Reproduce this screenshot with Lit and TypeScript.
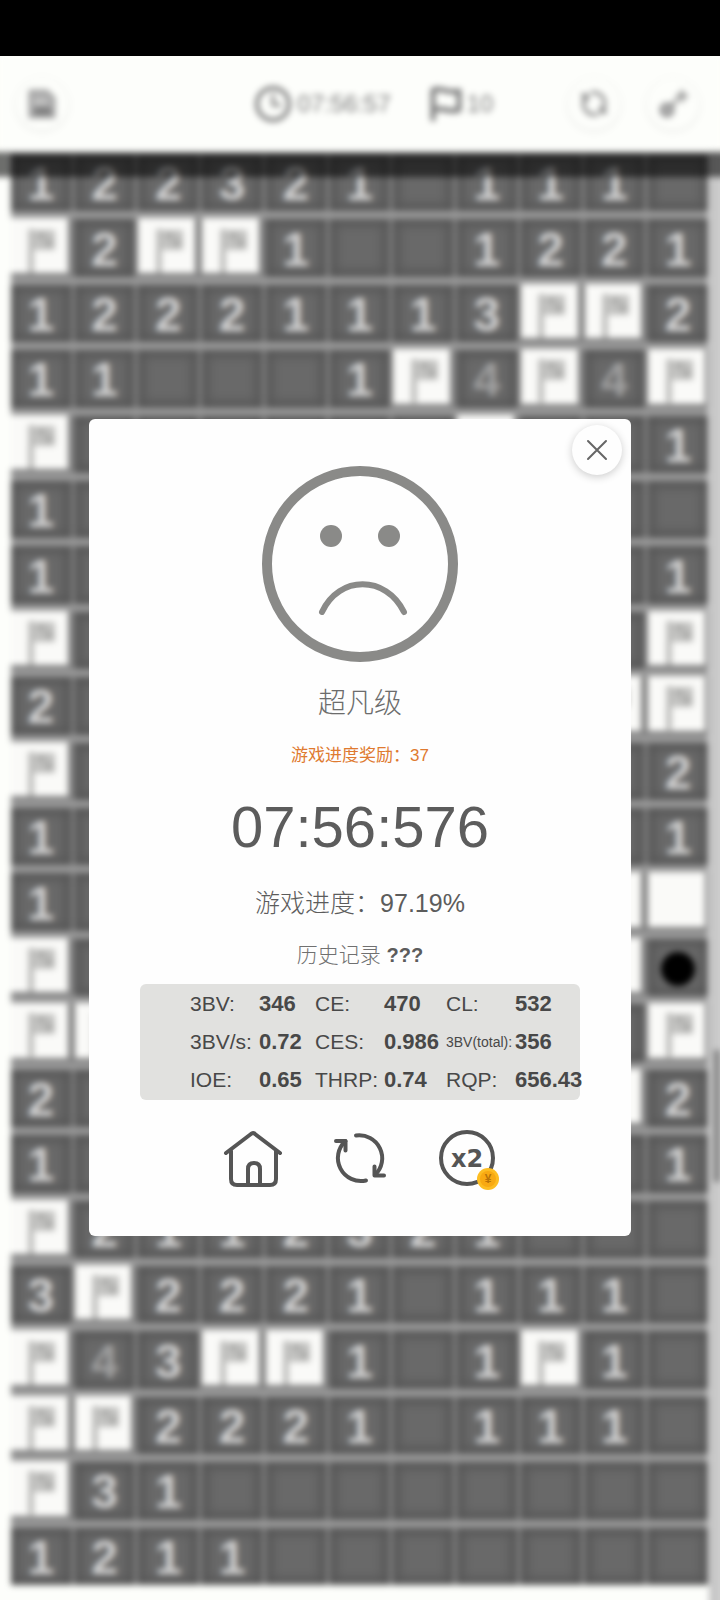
import { LitElement, html, css, svg, nothing } from "lit";
import { customElement, property } from "lit/decorators.js";
import { classMap } from "lit/directives/class-map.js";

// F flag, U covered, * mine, . cleared, digits are neighbour counts
const ROWS = [
  "122321.111.",
  "F2FF1..1221",
  "12221113FF2",
  "11...1F4F4F",
  "F......F..1",
  "1..........",
  "1.........1",
  "F.........F",
  "2........FF",
  "F.........2",
  "1.........1",
  "1........UU",
  "F........U*",
  "FF........F",
  "2........U2",
  "1.........1",
  "F2112321...",
  "3F2221.111.",
  "F43FF1.1F1.",
  "FF2221.111.",
  "F31........",
  "1211.......",
];

const STATS: Array<[string, string]> = [
  ["3BV:", "346"],
  ["CE:", "470"],
  ["CL:", "532"],
  ["3BV/s:", "0.72"],
  ["CES:", "0.986"],
  ["3BV(total):", "356"],
  ["IOE:", "0.65"],
  ["THRP:", "0.74"],
  ["RQP:", "656.43"],
];

const refreshPaths = svg`
  <path d="M25 5.5A23 23 0 0 1 44 45"/>
  <path d="M43.5 36.5V45.5H53"/>
  <path d="M35 50.5A23 23 0 0 1 14.5 11"/>
  <path d="M5 11H14.5V20.5"/>`;

@customElement("mine-header")
export class MineHeader extends LitElement {
  static styles = css`
    :host {
      display: flex;
      align-items: center;
      height: 96px;
      padding: 0 21px 0 16px;
      position: relative;
      z-index: 1;
      background: #fdfefb;
      box-sizing: border-box;
      color: #7c7c7c;
      font-size: 24px;
    }
    :host::after {
      content: "";
      position: absolute;
      left: -12px;
      right: -12px;
      top: 100%;
      height: 25px;
      background: rgba(0, 0, 0, 0.57);
    }
    .round {
      width: 52px;
      height: 52px;
      padding: 0;
      border: 0;
      border-radius: 50%;
      background: #fdfefb;
      box-shadow: 0 1px 4px rgba(0, 0, 0, 0.12);
      display: grid;
      place-items: center;
      color: #8c8c8c;
    }
    .wide { flex: 5; }
    .narrow { flex: 2; }
    .status {
      display: flex;
      align-items: center;
      gap: 38px;
    }
    .item {
      display: flex;
      align-items: center;
      gap: 5px;
    }
    .actions {
      display: flex;
      gap: 27px;
    }
    svg { display: block; fill: none; stroke: currentColor; stroke-linecap: round; stroke-linejoin: round; }
  `;
  render() {
    return html`
      <button class="round" aria-label="保存">
        <svg width="28" height="30" viewBox="0 0 28 30" stroke-width="3">
          <path d="M2 2H19L26 9V28H2Z" fill="#b0b0b0" stroke="#a0a0a0" />
          <path d="M7 13H17" stroke="#e4e4e2" stroke-width="2" />
          <path d="M8 24V20H21V24Z" stroke="#707070" stroke-width="3" />
        </svg>
      </button>
      <span class="wide"></span>
      <div class="status">
        <span class="item">
          <svg width="38" height="38" viewBox="0 0 38 38" stroke-width="4">
            <circle cx="19" cy="19" r="16" />
            <path d="M19 10V20H26" stroke-width="3" />
          </svg>
          <span>07:56:57</span>
        </span>
        <span class="item">
          <svg width="33" height="36" viewBox="0 0 33 36" stroke-width="5">
            <path d="M4 33V4C12 1 19 8 30 5V24C19 27 13 20 4 24" />
          </svg>
          <span>10</span>
        </span>
      </div>
      <span class="narrow"></span>
      <div class="actions">
        <button class="round" aria-label="重新开始">
          <svg width="28" height="28" viewBox="0 0 58 58" stroke-width="7">${refreshPaths}</svg>
        </button>
        <button class="round" aria-label="道具">
          <svg width="30" height="30" viewBox="0 0 30 30" stroke-width="3">
            <circle cx="9" cy="21" r="6" fill="#b0b0b0" />
            <path d="M14 16L19 11" />
            <path d="M24 2V12M19 7H29" />
          </svg>
        </button>
      </div>
    `;
  }
}

@customElement("mine-board")
export class MineBoard extends LitElement {
  @property({ attribute: false }) rows: string[] = [];

  static styles = css`
    :host {
      display: flex;
      flex-direction: column;
      gap: 8px;
      background: #989898;
    }
    .row {
      flex: 1 1 0;
      min-height: 0;
      display: grid;
      grid-template-columns: repeat(11, minmax(0, 1fr));
      grid-template-rows: minmax(0, 1fr);
      gap: 4px;
      background: #808080;
    }
    .cell {
      display: grid;
      place-items: center;
      box-sizing: border-box;
      overflow: hidden;
      padding-top: 3px;
      background: #696969;
      box-shadow: inset 0 0 8px 6px #565656;
      color: #d2d2d2;
      font-size: 48px;
      font-weight: 700;
      line-height: 54px;
    }
    .four { color: #a0a0a0; }
    .covered {
      margin: -1px 3px 4px 0;
      padding: 0;
      background: #fafaf8;
      box-shadow: none;
    }
    svg { display: block; }
  `;

  private cell(c: string) {
    const content =
      c === "F"
        ? html`<svg width="56" height="54" viewBox="0 0 56 54">
            <path d="M20 10V54" stroke="#b4b4b2" stroke-width="5" />
            <path d="M20 11H44V31H20Z" fill="#c2c2c0" />
            <path d="M27 13h7v7h-7zM34 20h8v8h-8z" fill="#adadab" />
          </svg>`
        : c === "*"
          ? html`<svg width="36" height="36" viewBox="0 0 36 36"><circle cx="18" cy="18" r="17" /></svg>`
          : c >= "1" && c <= "8"
            ? c
            : nothing;
    return html`<div class=${classMap({ cell: true, covered: c === "F" || c === "U", four: c === "4" })}>${content}</div>`;
  }

  render() {
    return this.rows.map((r) => html`<div class="row">${[...r].map((c) => this.cell(c))}</div>`);
  }
}

@customElement("result-dialog")
export class ResultDialog extends LitElement {
  static styles = css`
    :host {
      display: flex;
      flex-direction: column;
      align-items: center;
      position: relative;
      box-sizing: border-box;
      width: 100%;
      max-width: 542px;
      padding: 47px 0 48px;
      border-radius: 6px;
      background: #fefefe;
      color: #5c5c5c;
      white-space: nowrap;
    }
    .close {
      position: absolute;
      top: 6px;
      right: 9px;
      width: 50px;
      height: 50px;
      padding: 0;
      border: 0;
      border-radius: 50%;
      background: #fefefe;
      box-shadow: 0 2px 8px rgba(0, 0, 0, 0.2);
      display: grid;
      place-items: center;
    }
    svg { display: block; fill: none; stroke-linecap: round; stroke-linejoin: round; }
    h1, p, dl, dd { margin: 0; font-weight: 400; }
    h1 {
      margin-top: 22px;
      font-size: 28px;
      line-height: 40px;
      font-weight: 300;
      color: #6c6c6c;
    }
    .reward {
      margin-top: 20px;
      font-size: 17px;
      line-height: 24px;
      color: #df7a30;
    }
    .time {
      margin-top: 27px;
      font-size: 58px;
      line-height: 64px;
    }
    .progress {
      margin-top: 28px;
      font-size: 25px;
      line-height: 32px;
      font-weight: 300;
    }
    .history {
      margin-top: 22px;
      font-size: 21px;
      line-height: 28px;
      font-weight: 300;
      color: #707070;
    }
    .history b { font-weight: 700; font-size: 20px; color: #5c5c5c; }
    dl {
      display: grid;
      grid-template-columns: 69px 56px 69px 62px 69px 1fr;
      align-items: center;
      box-sizing: border-box;
      width: calc(100% - 102px);
      margin-top: 15px;
      padding: 1px 0 1px 50px;
      border-radius: 6px;
      background: #e1e1df;
      line-height: 38px;
      font-size: 22px;
      color: #484848;
    }
    dt { font-size: 21px; }
    .long { font-size: 14px; }
    dd { font-weight: 700; width: 0; }
    .actions {
      display: flex;
      gap: 49px;
      margin-top: 30px;
    }
    .actions button {
      width: 58px;
      height: 58px;
      padding: 0;
      border: 0;
      background: none;
    }
    .actions svg { stroke: #555; stroke-width: 4; overflow: visible; }
    .x2 { font: bold 24px "DejaVu Sans", sans-serif; fill: #555; stroke: none; }
    .yen { font: bold 12px "Liberation Sans", sans-serif; fill: #b97408; stroke: none; }
  `;
  render() {
    return html`
      <button class="close" aria-label="关闭">
        <svg width="22" height="22" viewBox="0 0 22 22" stroke="#666" stroke-width="2">
          <path d="M2 2L20 20M20 2L2 20" />
        </svg>
      </button>
      <svg width="196" height="196" viewBox="0 0 196 196" stroke="#8a8a88" aria-hidden="true">
        <circle cx="98" cy="98" r="93" stroke-width="10" />
        <circle cx="69" cy="70" r="11" fill="#8a8a88" stroke="none" />
        <circle cx="127" cy="70" r="11" fill="#8a8a88" stroke="none" />
        <path d="M60 146C77 109 124 109 142 146" stroke-width="6" />
      </svg>
      <h1>超凡级</h1>
      <p class="reward">游戏进度奖励：37</p>
      <p class="time">07:56:576</p>
      <p class="progress">游戏进度：97.19%</p>
      <p class="history">历史记录 <b>???</b></p>
      <dl>
        ${STATS.map(([k, v]) => html`<dt class=${classMap({ long: k.length > 8 })}>${k}</dt><dd>${v}</dd>`)}
      </dl>
      <div class="actions">
        <button aria-label="主页">
          <svg width="58" height="58" viewBox="0 0 58 58">
            <path d="M2 23L27 4Q29 2 31 4L56 23" />
            <path d="M7 21V49Q7 55 13 55H46Q52 55 52 49V21" />
            <path d="M24 54V39Q24 33 30 33Q36 33 36 39V54" />
          </svg>
        </button>
        <button aria-label="重新开始">
          <svg width="58" height="58" viewBox="0 0 58 58">${refreshPaths}</svg>
        </button>
        <button aria-label="双倍奖励">
          <svg width="58" height="58" viewBox="0 0 58 58">
            <circle cx="29" cy="28" r="26" />
            <text class="x2" x="29" y="37" text-anchor="middle">x2</text>
            <circle cx="50" cy="49" r="11" fill="#fdbd22" stroke="none" />
            <circle cx="50" cy="49" r="8" fill="#f8a912" stroke="none" />
            <text class="yen" x="50" y="53" text-anchor="middle">¥</text>
          </svg>
        </button>
      </div>
    `;
  }
}

@customElement("app-root")
export class AppRoot extends LitElement {
  static styles = css`
    :host {
      display: flex;
      flex-direction: column;
      position: relative;
      min-height: 100vh;
      overflow: hidden;
      background: #fdfefb;
      font-family: "Liberation Sans", "Noto Sans CJK SC", sans-serif;
    }
    .system-bar {
      height: 56px;
      background: #000;
      position: relative;
      z-index: 1;
    }
    .scene {
      flex: 1;
      display: flex;
      flex-direction: column;
      filter: blur(3px);
    }
    .field {
      flex: 1;
      display: flex;
      padding-left: 11px;
    }
    mine-board {
      flex: 1;
      margin: 2px 1px 15px 0;
    }
    .track {
      width: 11px;
      margin-bottom: -12px;
      background: #c6c6c6;
      box-shadow: 12px 0 #c6c6c6;
    }
    .thumb {
      height: 132px;
      margin: 898px 0 0 5px;
      background: #7c7c7c;
      box-shadow: 12px 0 #7c7c7c;
    }
    .overlay {
      position: absolute;
      inset: 54px 0 0;
      z-index: 2;
      display: grid;
      place-items: center;
      padding: 0 24px;
    }
  `;
  render() {
    return html`
      <div class="system-bar"></div>
      <div class="scene">
        <mine-header></mine-header>
        <div class="field">
          <mine-board .rows=${ROWS}></mine-board>
          <div class="track"><div class="thumb"></div></div>
        </div>
      </div>
      <div class="overlay"><result-dialog role="dialog" aria-label="游戏结果"></result-dialog></div>
    `;
  }
}
